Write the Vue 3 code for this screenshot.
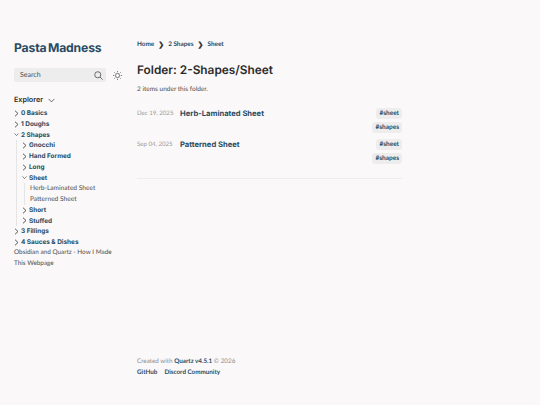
<script setup>
const items = [
  { date: 'Dec 19, 2025', title: 'Herb-Laminated Sheet' },
  { date: 'Sep 04, 2025', title: 'Patterned Sheet' },
]
</script>

<template>
  <div class="page">
    <aside class="side">
      <h1 class="brand">Pasta Madness</h1>
      <div class="tools">
        <div class="search">
          <span>Search</span>
          <svg width="9" height="9" viewBox="0 0 10 10" fill="none" stroke="#4e4e4e" stroke-width="0.9"><circle cx="4.2" cy="4.2" r="3.4"/><path d="M6.7 6.7L9.6 9.6"/></svg>
        </div>
        <svg class="sun" width="9" height="9" viewBox="0 0 10 10" fill="none" stroke="#4e4e4e" stroke-width="0.8"><circle cx="5" cy="5" r="2.3"/><path d="M5 0v1.4M5 8.6V10M0 5h1.4M8.6 5H10M1.5 1.5l1 1M7.5 7.5l1 1M1.5 8.5l1-1M7.5 2.5l1-1"/></svg>
      </div>
      <div class="explorer-head">
        <span>Explorer</span>
        <svg width="7" height="5" viewBox="0 0 8 5" fill="none" stroke="#2b2b2b" stroke-width="0.8"><path d="M0.7 0.7L4 4L7.3 0.7"/></svg>
      </div>
      <ul class="tree">
        <li class="folder"><svg class="chev" viewBox="0 0 5 7"><path d="M1 .7L4 3.5L1 6.3"/></svg>0 Basics</li>
        <li class="folder"><svg class="chev" viewBox="0 0 5 7"><path d="M1 .7L4 3.5L1 6.3"/></svg>1 Doughs</li>
        <li class="folder"><svg class="chev open" viewBox="0 0 7 5"><path d="M.7 1L3.5 4L6.3 1"/></svg>2 Shapes</li>
        <li>
          <ul class="tree nested">
            <li class="folder"><svg class="chev" viewBox="0 0 5 7"><path d="M1 .7L4 3.5L1 6.3"/></svg>Gnocchi</li>
            <li class="folder"><svg class="chev" viewBox="0 0 5 7"><path d="M1 .7L4 3.5L1 6.3"/></svg>Hand Formed</li>
            <li class="folder"><svg class="chev" viewBox="0 0 5 7"><path d="M1 .7L4 3.5L1 6.3"/></svg>Long</li>
            <li class="folder"><svg class="chev open" viewBox="0 0 7 5"><path d="M.7 1L3.5 4L6.3 1"/></svg>Sheet</li>
            <li>
              <ul class="tree nested inner">
                <li class="file">Herb-Laminated Sheet</li>
                <li class="file">Patterned Sheet</li>
              </ul>
            </li>
            <li class="folder"><svg class="chev" viewBox="0 0 5 7"><path d="M1 .7L4 3.5L1 6.3"/></svg>Short</li>
            <li class="folder"><svg class="chev" viewBox="0 0 5 7"><path d="M1 .7L4 3.5L1 6.3"/></svg>Stuffed</li>
          </ul>
        </li>
        <li class="folder"><svg class="chev" viewBox="0 0 5 7"><path d="M1 .7L4 3.5L1 6.3"/></svg>3 Fillings</li>
        <li class="folder"><svg class="chev" viewBox="0 0 5 7"><path d="M1 .7L4 3.5L1 6.3"/></svg>4 Sauces &amp; Dishes</li>
        <li class="file long">Obsidian and Quartz - How I Made This Webpage</li>
      </ul>
    </aside>
    <main class="main">
      <nav class="crumbs">
        <span>Home</span><i>❯</i><span>2 Shapes</span><i>❯</i><span>Sheet</span>
      </nav>
      <h2 class="title">Folder: 2-Shapes/Sheet</h2>
      <p class="count">2 items under this folder.</p>
      <div class="list">
        <div v-for="item in items" :key="item.title" class="row">
          <span class="date">{{ item.date }}</span>
          <span class="name">{{ item.title }}</span>
          <div class="tags">
            <span class="tag">#sheet</span>
            <span class="tag">#shapes</span>
          </div>
        </div>
      </div>
      <hr class="rule" />
      <footer class="foot">
        <p>Created with <b>Quartz v4.5.1</b> © 2026</p>
        <p class="links"><b>GitHub</b><b>Discord Community</b></p>
      </footer>
    </main>
  </div>
</template>

<style>
html, body { margin: 0; background: #faf8f8; }
</style>

<style scoped>
.page {
  width: 540px;
  height: 405px;
  display: flex;
  background: #faf8f8;
  font-family: Lato, "Open Sans", sans-serif;
  text-rendering: geometricPrecision;
  overflow: hidden;
}
.side { width: 137px; padding: 40px 0 0 14px; box-sizing: border-box; flex: none; }
.brand { margin: 0; font: 700 12.2px/15px Inter, sans-serif; word-spacing: -1.2px; letter-spacing: -0.16px; color: #284b63; }
.tools { display: flex; align-items: center; gap: 7px; margin-top: 13px; }
.search {
  width: 92px; height: 14px; border-radius: 2px; background: #ededed;
  display: flex; align-items: center; justify-content: space-between;
  padding: 0 3px 0 6px; box-sizing: border-box;
  font-size: 7px; color: #4e4e4e;
}
.sun { flex: none; }
.explorer-head {
  display: flex; align-items: center; gap: 5px; margin-top: 12px; height: 12px;
  font: 600 7.2px/12px Inter, sans-serif; color: #2b2b2b;
}
.tree { list-style: none; margin: 0; padding: 0; }
.tree > li { min-height: 10.75px; }
.explorer-head + .tree { margin-top: 2px; }
.folder { display: flex; align-items: center; gap: 2px; font: 700 6.4px/10.75px Inter, sans-serif; color: #284b63; }
.chev { width: 5px; height: 7px; fill: none; stroke: #333; stroke-width: 0.8; flex: none; }
.chev.open { width: 5px; height: 5px; }
.nested { border-left: 1px solid #e5e5e5; margin-left: 2px; padding-left: 5px; }
.nested.inner { margin-left: 2px; padding-left: 5px; }
.file { font-size: 6.6px; line-height: 10.75px; color: #4e4e4e; font-weight: 400; }
.long { width: 110px; font-size: 6.4px; }
.main { width: 265px; padding: 40px 0 0 0; position: relative; flex: none; }
.crumbs { display: flex; align-items: center; gap: 4px; font-size: 6.4px; line-height: 10px; font-weight: 700; color: #284b63; }
.crumbs i { font-style: normal; color: #333; font-size: 7px; }
.title { margin: 12px 0 0; font: 600 11.85px/16px Inter, sans-serif; color: #2b2b2b; }
.count { margin: 7px 0 0; font-size: 6.5px; line-height: 9px; color: #4e4e4e; }
.list { margin-top: 14px; display: flex; flex-direction: column; gap: 6px; }
.row { display: flex; align-items: flex-start; }
.date { width: 43px; flex: none; font-size: 6.1px; line-height: 11px; color: #9a9a9a; }
.name { flex: 1; font: 700 7.6px/11px Inter, sans-serif; color: #284b63; }
.tags { display: flex; flex-direction: column; align-items: flex-end; gap: 3px; }
.tag {
  background: #ededed; border-radius: 3px; padding: 0 3px; height: 11px;
  font-size: 6.5px; line-height: 11px; font-weight: 700; color: #284b63;
}
.rule { border: 0; border-top: 1px solid #ededed; margin: 14px 0 0; }
.foot { position: absolute; left: 0; top: 357px; font-size: 6.3px; line-height: 10.5px; color: #8e8e8e; }
.foot p { margin: 0; }
.foot b { font-weight: 700; color: #284b63; }
.links { display: flex; gap: 7px; }
</style>
